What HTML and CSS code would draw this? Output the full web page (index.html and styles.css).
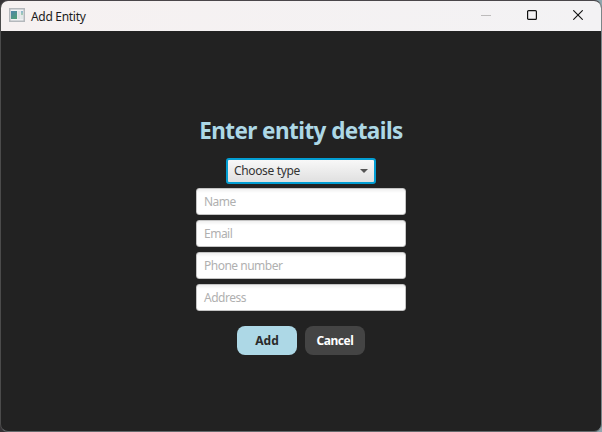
FILE: index.html
```html
<!DOCTYPE html>
<html lang="en">
<head>
<meta charset="utf-8">
<title>Add Entity</title>
<link rel="stylesheet" href="styles.css">
</head>
<body>
<div class="window">
  <header class="titlebar">
    <svg class="app-icon" width="16" height="14" viewBox="0 0 16 14">
      <defs>
        <linearGradient id="pane" x1="0" y1="0" x2="0.6" y2="1"><stop offset="0" stop-color="#4c84ac"/><stop offset="1" stop-color="#4f9d7a"/></linearGradient>
        <linearGradient id="side" x1="0" y1="0" x2="0" y2="1"><stop offset="0" stop-color="#8cb5d2"/><stop offset="1" stop-color="#a5d0b0"/></linearGradient>
      </defs>
      <rect x=".75" y=".75" width="14.5" height="12.5" fill="#f0f2f4" stroke="#b4b8bc" stroke-width="1.5"/>
      <rect x="2" y="3" width="6" height="8" fill="url(#pane)"/>
      <rect x="8.5" y="3" width="3" height="8" fill="#dde1e4"/>
      <rect x="12" y="3" width="2" height="4" fill="url(#side)"/>
      <rect x="12" y="7" width="2" height="4" fill="#e2e8e8"/>
    </svg>
    <span class="caption">Add Entity</span>
    <div class="controls">
      <svg width="10" height="10"><path d="M0 5.5H10" stroke="#bdbbbb"/></svg>
      <svg width="10" height="10"><rect x=".6" y=".6" width="8.8" height="8.8" rx="1" fill="none" stroke="#111" stroke-width="1.2"/></svg>
      <svg width="10" height="10"><path d="M.3 .3L9.7 9.7M9.7 .3L.3 9.7" stroke="#111" stroke-width="1.1"/></svg>
    </div>
  </header>
  <main class="form">
    <h1>Enter entity details</h1>
    <div class="combo"><span>Choose type</span><svg width="8" height="4"><path d="M0 0H8L4 4Z" fill="#555"/></svg></div>
    <div class="field"><span>Name</span></div>
    <div class="field"><span>Email</span></div>
    <div class="field"><span>Phone number</span></div>
    <div class="field"><span>Address</span></div>
    <div class="actions">
      <button class="add">Add</button>
      <button class="cancel">Cancel</button>
    </div>
  </main>
</div>
</body>
</html>
```
FILE: styles.css
```css
* { box-sizing: border-box; }
body {
  margin: 0;
  width: 602px;
  height: 432px;
  overflow: hidden;
  background: linear-gradient(90deg, #363336 0 210px, #747c80 230px 570px, #8fa8b0);
  font: 12px/16px "Noto Sans", "Open Sans", sans-serif;
}
.window {
  height: 432px;
  border: 1px solid;
  border-color: #4a464a #7b8588 #64696c #4b4b4b;
  border-radius: 8px;
  overflow: hidden;
  background: #222;
}
.titlebar {
  height: 30px;
  display: flex;
  align-items: center;
  padding: 0 18px 2px 8px;
  background: linear-gradient(90deg, #f6f1f1, #f3f2f4);
  color: #1b1b1b;
}
.caption { margin: 3px 0 0 6px; letter-spacing: -0.3px; }
.controls { display: flex; gap: 36px; margin-left: auto; }
.form { display: flex; flex-direction: column; align-items: center; padding-top: 84px; }
h1 {
  margin: 0 0 11px;
  font-size: 22.5px;
  line-height: 32px;
  font-weight: 700;
  letter-spacing: -0.57px;
  white-space: nowrap;
  color: #add8e6;
}
.combo {
  width: 150px;
  height: 26px;
  margin-bottom: 4px;
  padding: 0 6px;
  display: flex;
  align-items: center;
  justify-content: space-between;
  border: 2px solid #039ed3;
  border-radius: 3px;
  background: linear-gradient(#f8f8f8, #e0e0e0);
  color: #333;
  letter-spacing: -0.35px;
}
.field {
  width: 210px;
  height: 27px;
  margin-bottom: 5px;
  padding: 5px 7px;
  border: 1px solid #c4c4c4;
  border-radius: 3px;
  background: linear-gradient(#efefef, #fff 4px);
  color: #b0b0b0;
  letter-spacing: -0.5px;
}
.field span { display: block; line-height: 16px; }
.actions { display: flex; gap: 8px; margin-top: 10px; }
button {
  width: 60px;
  height: 29px;
  padding: 0;
  border: 0;
  border-radius: 8px;
  font: 700 12px/16px "Noto Sans", "Open Sans", sans-serif;
}
.add { background: #add8e6; color: #2a2a2a; }
.cancel { background: #444; color: #fff; letter-spacing: -0.45px; }
```
